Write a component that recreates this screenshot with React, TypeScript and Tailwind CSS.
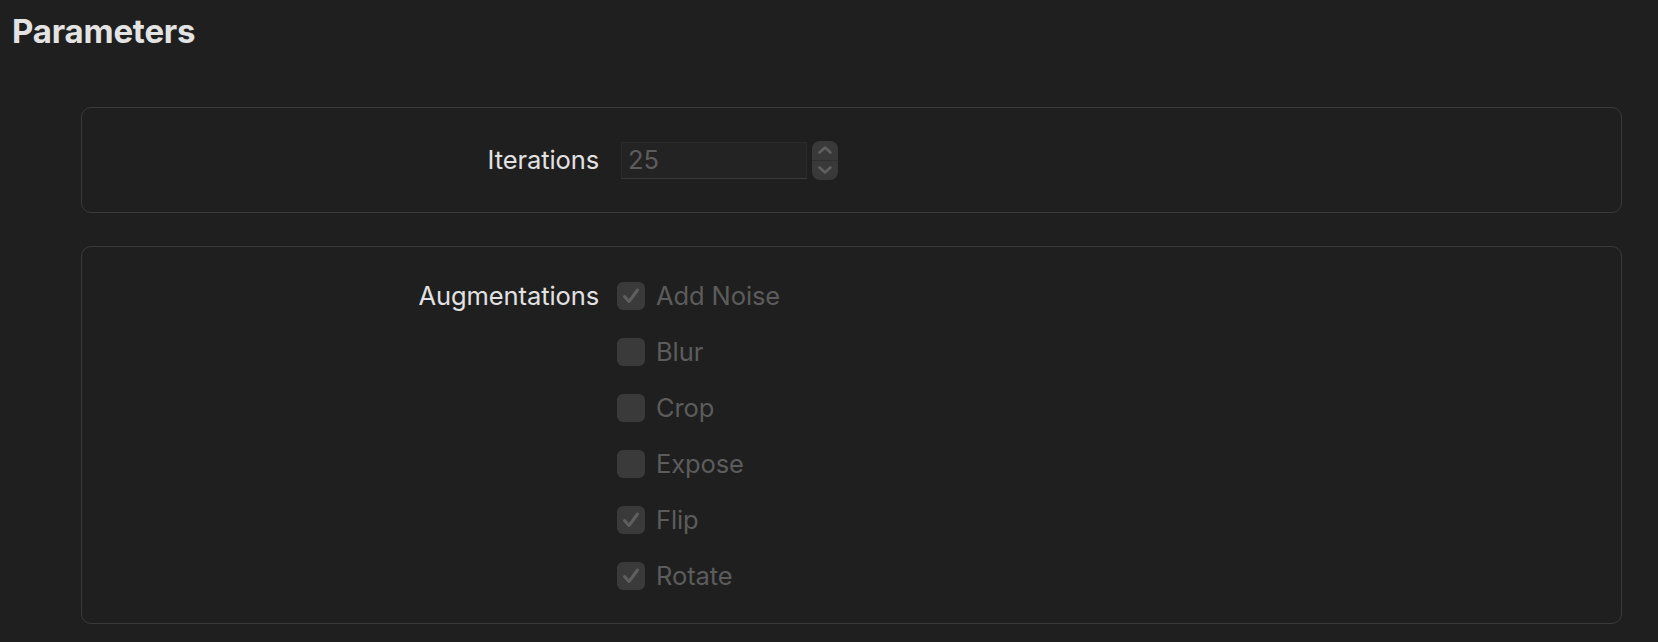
import React from "react";

const Check = () => (
  <svg width="22" height="22" viewBox="0 0 22 22" fill="none">
    <path d="M4.5 11.5 L9 16.5 L17.5 5" stroke="#5f5f5f" strokeWidth="3" strokeLinecap="round" strokeLinejoin="round" />
  </svg>
);

const items = [
  { label: "Add Noise", checked: true },
  { label: "Blur", checked: false },
  { label: "Crop", checked: false },
  { label: "Expose", checked: false },
  { label: "Flip", checked: true },
  { label: "Rotate", checked: true },
];

export default function App() {
  return (
    <div
      className="w-[1658px] h-[642px] bg-[#1f1f1f] overflow-hidden"
      style={{ fontFamily: "Inter, 'Noto Sans', sans-serif" }}
    >
      <div className="pl-[12px] pt-[11px] h-[51px]">
        <h1 className="text-[33px] leading-[40px] font-bold text-[#e3e3e3] tracking-[-0.2px]">Parameters</h1>
      </div>
      <div className="pl-[81px] pr-[36px] pt-[56px] flex flex-col gap-[33px]">
        <div className="h-[106px] rounded-[10px] border-[1.5px] border-[#3a3a3a] flex items-center">
          <div className="w-[517px] text-right text-[25.5px] leading-[28px] text-[#e2e2e2] tracking-[-0.1px]">Iterations</div>
          <div className="ml-[22px] flex items-center gap-[5px]">
            <div className="w-[186px] h-[37px] bg-[#232323] border border-[#2b2b2b] border-b-[#3a3a3a] flex items-center pl-[6px] text-[25.5px] text-[#5d5d5d]">
              25
            </div>
            <div className="w-[26px] h-[39px] rounded-[8px] bg-[#393939] flex flex-col">
              <div className="flex-1 flex items-center justify-center border-b border-[#2f2f2f]">
                <svg width="16" height="10" viewBox="0 0 16 10" fill="none">
                  <path d="M2.5 7.5 L8 2.5 L13.5 7.5" stroke="#5f5f5f" strokeWidth="2.6" strokeLinecap="round" strokeLinejoin="round" />
                </svg>
              </div>
              <div className="flex-1 flex items-center justify-center">
                <svg width="16" height="10" viewBox="0 0 16 10" fill="none">
                  <path d="M2.5 2.5 L8 7.5 L13.5 2.5" stroke="#5f5f5f" strokeWidth="2.6" strokeLinecap="round" strokeLinejoin="round" />
                </svg>
              </div>
            </div>
          </div>
        </div>
        <div className="h-[378px] rounded-[10px] border-[1.5px] border-[#3a3a3a] flex pt-[35px]">
          <div className="w-[517px] h-[28px] flex items-center justify-end text-[25.5px] leading-[28px] text-[#e2e2e2] tracking-[-0.1px]">
            Augmentations
          </div>
          <div className="ml-[18px] flex flex-col gap-[28px]">
            {items.map((it) => (
              <div key={it.label} className="h-[28px] flex items-center gap-[11px]">
                <div className="w-[28px] h-[28px] rounded-[6px] bg-[#3a3a3a] flex items-center justify-center">
                  {it.checked && <Check />}
                </div>
                <span className="text-[25.5px] leading-[28px] text-[#5c5c5c] tracking-[-0.1px]">{it.label}</span>
              </div>
            ))}
          </div>
        </div>
      </div>
    </div>
  );
}
